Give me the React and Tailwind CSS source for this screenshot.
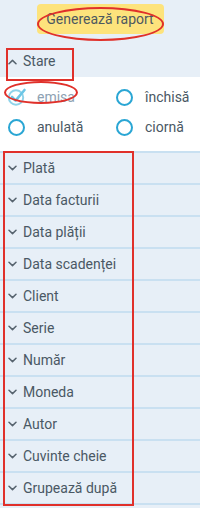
import React from "react";

const rows = [
  "Plată",
  "Data facturii",
  "Data plății",
  "Data scadenței",
  "Client",
  "Serie",
  "Număr",
  "Moneda",
  "Autor",
  "Cuvinte cheie",
  "Grupează după",
];

function ChevronDown() {
  return (
    <svg width="9" height="6" viewBox="0 0 9 6" className="shrink-0">
      <path d="M1 1.2 L4.5 4.6 L8 1.2" fill="none" stroke="#56636e" strokeWidth="1.5" strokeLinecap="round" strokeLinejoin="round" />
    </svg>
  );
}

function ChevronUp() {
  return (
    <svg width="9" height="6" viewBox="0 0 9 6" className="shrink-0">
      <path d="M1 4.8 L4.5 1.4 L8 4.8" fill="none" stroke="#56636e" strokeWidth="1.5" strokeLinecap="round" strokeLinejoin="round" />
    </svg>
  );
}

function Radio() {
  return <span className="w-[17px] h-[17px] rounded-full border-2 border-[#2aa6d4] shrink-0" />;
}

function Checked() {
  return (
    <svg width="20" height="19" viewBox="0 0 20 19" className="shrink-0 -ml-[1px] -mt-[2px]">
      <circle cx="9" cy="10.5" r="7.2" fill="none" stroke="#8fd3ea" strokeWidth="2" />
      <path d="M5 10 L8.6 13.6 L17.5 3" fill="none" stroke="#6cc6e6" strokeWidth="2.6" strokeLinecap="round" strokeLinejoin="round" />
    </svg>
  );
}

export default function App() {
  return (
    <div className="relative w-[200px] h-[508px] overflow-hidden bg-[#e7eff7] font-['Roboto',sans-serif] text-[#4a5864]">
      {/* top */}
      <div className="h-[46px] flex justify-center pt-[4px]">
        <div className="relative w-[127px] h-[30px] bg-[#fde37c] rounded-[4px] flex items-center justify-center text-[14px] text-[#4d5860]">
          Generează raport
          <span className="absolute left-[0px] top-[3px] w-[127px] h-[34px] rounded-[50%] border-2 border-[#e0302a]" />
        </div>
      </div>

      {/* Stare header */}
      <div className="relative h-[31px] flex items-center gap-[6px] pl-[8px] text-[14px]">
        <ChevronUp />
        <span>Stare</span>
        <span className="absolute left-[6px] top-[2px] w-[68px] h-[33px] border-2 border-[#e0302a] z-10" />
      </div>

      {/* options */}
      <div className="bg-white h-[74px] pt-[12px] pl-[8px] text-[14px]">
        <div className="grid grid-cols-[108px_1fr] gap-y-[13px]">
          <div className="relative flex items-center gap-[10px] h-[17px]">
            <Checked />
            <span className="text-[#8ea2b3]">emisa</span>
            <span className="absolute left-[-4px] top-[-8px] w-[74px] h-[23px] rounded-[50%] border-2 border-[#e0302a]" />
          </div>
          <div className="flex items-center gap-[12px] h-[17px]">
            <Radio />
            <span>închisă</span>
          </div>
          <div className="flex items-center gap-[12px] h-[17px]">
            <Radio />
            <span>anulată</span>
          </div>
          <div className="flex items-center gap-[12px] h-[17px]">
            <Radio />
            <span>ciornă</span>
          </div>
        </div>
      </div>

      {/* rows */}
      <div className="relative border-t-2 border-[#c9e0f1]">
        {rows.map((r) => (
          <div key={r} className="h-[32px] border-b-2 border-[#c9e0f1] flex items-center gap-[6px] pl-[8px] text-[14px]">
            <ChevronDown />
            <span>{r}</span>
          </div>
        ))}
        <span className="absolute left-[3px] top-[-2px] w-[131px] h-[355px] border-2 border-[#e0302a]" />
      </div>
    </div>
  );
}
